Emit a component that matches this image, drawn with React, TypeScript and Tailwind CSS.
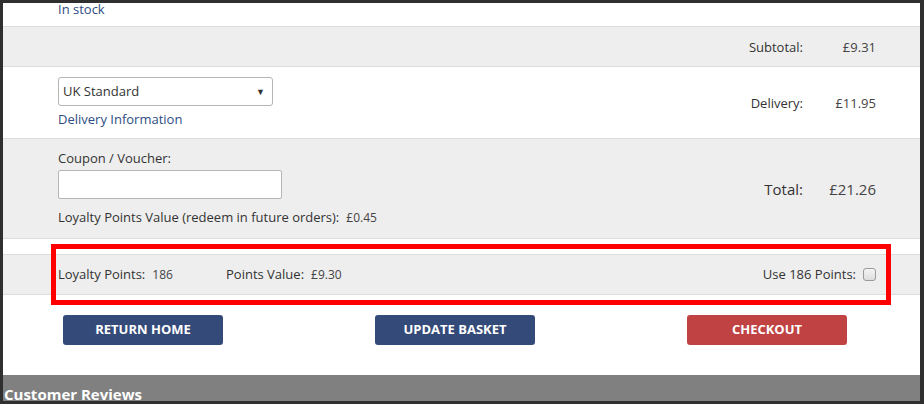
import React from "react";

const font = { fontFamily: '"Open Sans", "Noto Sans", Arial, sans-serif' };

const SummaryCell = ({ label, value, big }: { label: string; value: string; big?: boolean }) => (
  <div className={`flex items-center ${big ? "text-[15px]" : "text-[13px]"} leading-[18px]`}>
    <div className="w-[120px] text-right text-[#333]">{label}</div>
    <div className="w-[73px] text-right text-[#444]">{value}</div>
  </div>
);

const App = () => {
  return (
    <div className="w-[924px] h-[409px] bg-white" style={font}>
      <div className="relative h-[404px] border-l-[3px] border-t-[3px] border-r-[4px] border-b-[3px] border-[#2f2f2f] overflow-hidden">
        {/* in stock row (cut off) */}
        <div className="h-[26px] pl-[55px]">
          <div className="-mt-[3px] text-[13px] leading-[18px] text-[#2e4d82]">In stock</div>
        </div>

        {/* subtotal */}
        <div className="flex h-[40px] items-center justify-end border-t border-[#dcdcdc] bg-[#eeeeee] pr-[44px]">
          <SummaryCell label="Subtotal:" value="£9.31" />
        </div>

        {/* delivery */}
        <div className="flex items-center justify-between border-t border-[#dcdcdc] bg-white pl-[55px] pr-[44px]">
          <div className="pt-[10px] pb-[10px]">
            <div className="flex h-[29px] w-[215px] items-center justify-between rounded-[3px] border border-[#b5b5b5] bg-white pl-[4px] pr-[7px] text-[13px] text-[#333]">
              <span>UK Standard</span>
              <span className="text-[9px] text-[#333]">▼</span>
            </div>
            <div className="mt-[4px] text-[13px] leading-[18px] text-[#2e4d82]">Delivery Information</div>
          </div>
          <SummaryCell label="Delivery:" value="£11.95" />
        </div>

        {/* coupon / total */}
        <div className="flex items-center justify-between border-t border-b border-[#dcdcdc] bg-[#eeeeee] pl-[55px] pr-[44px]">
          <div className="pt-[10px] pb-[11px]">
            <div className="text-[13px] leading-[18px] text-[#333]">Coupon / Voucher:</div>
            <div className="mt-[3px] h-[29px] w-[224px] rounded-[2px] border border-[#b5b5b5] bg-white" />
            <div className="mt-[9px] text-[13px] leading-[18px] text-[#333]">
              Loyalty Points Value (redeem in future orders):
              <span className="ml-[7px] text-[12px] text-[#444]">£0.45</span>
            </div>
          </div>
          <SummaryCell label="Total:" value="£21.26" big />
        </div>

        {/* loyalty points */}
        <div className="mt-[15px] flex h-[41px] items-center justify-between border-t border-b border-[#dcdcdc] bg-[#eeeeee] pl-[55px] pr-[44px] text-[13px] text-[#333]">
          <div className="flex">
            <span className="w-[168px]">
              Loyalty Points:<span className="ml-[7px] text-[12px] text-[#444]">186</span>
            </span>
            <span>
              Points Value:<span className="ml-[7px] text-[12px] text-[#444]">£9.30</span>
            </span>
          </div>
          <div className="flex items-center">
            <span>Use 186 Points:</span>
            <span className="ml-[7px] h-[13px] w-[13px] rounded-[3px] border border-[#9a9a9a] bg-gradient-to-b from-[#f4f4f4] to-[#dedede]" />
          </div>
        </div>

        {/* buttons */}
        <div className="mt-[20px] flex gap-[152px] pl-[60px]">
          <button className="h-[30px] w-[160px] rounded-[3px] bg-[#344a78] text-[13px] font-bold text-white">RETURN HOME</button>
          <button className="h-[30px] w-[160px] rounded-[3px] bg-[#344a78] text-[13px] font-bold text-white">UPDATE BASKET</button>
          <button className="h-[30px] w-[160px] rounded-[3px] bg-[#c04242] text-[13px] font-bold text-white">CHECKOUT</button>
        </div>

        {/* customer reviews header */}
        <div className="mt-[30px] h-[40px] bg-[#808080] pl-[1px] pt-[8px]">
          <div className="text-[15px] font-bold leading-[22px] text-white">Customer Reviews</div>
        </div>

        {/* highlight annotation */}
        <div className="absolute left-[48px] top-[241px] h-[61px] w-[840px] border-[5px] border-[#ff0000]" />
      </div>
    </div>
  );
};

export default App;
